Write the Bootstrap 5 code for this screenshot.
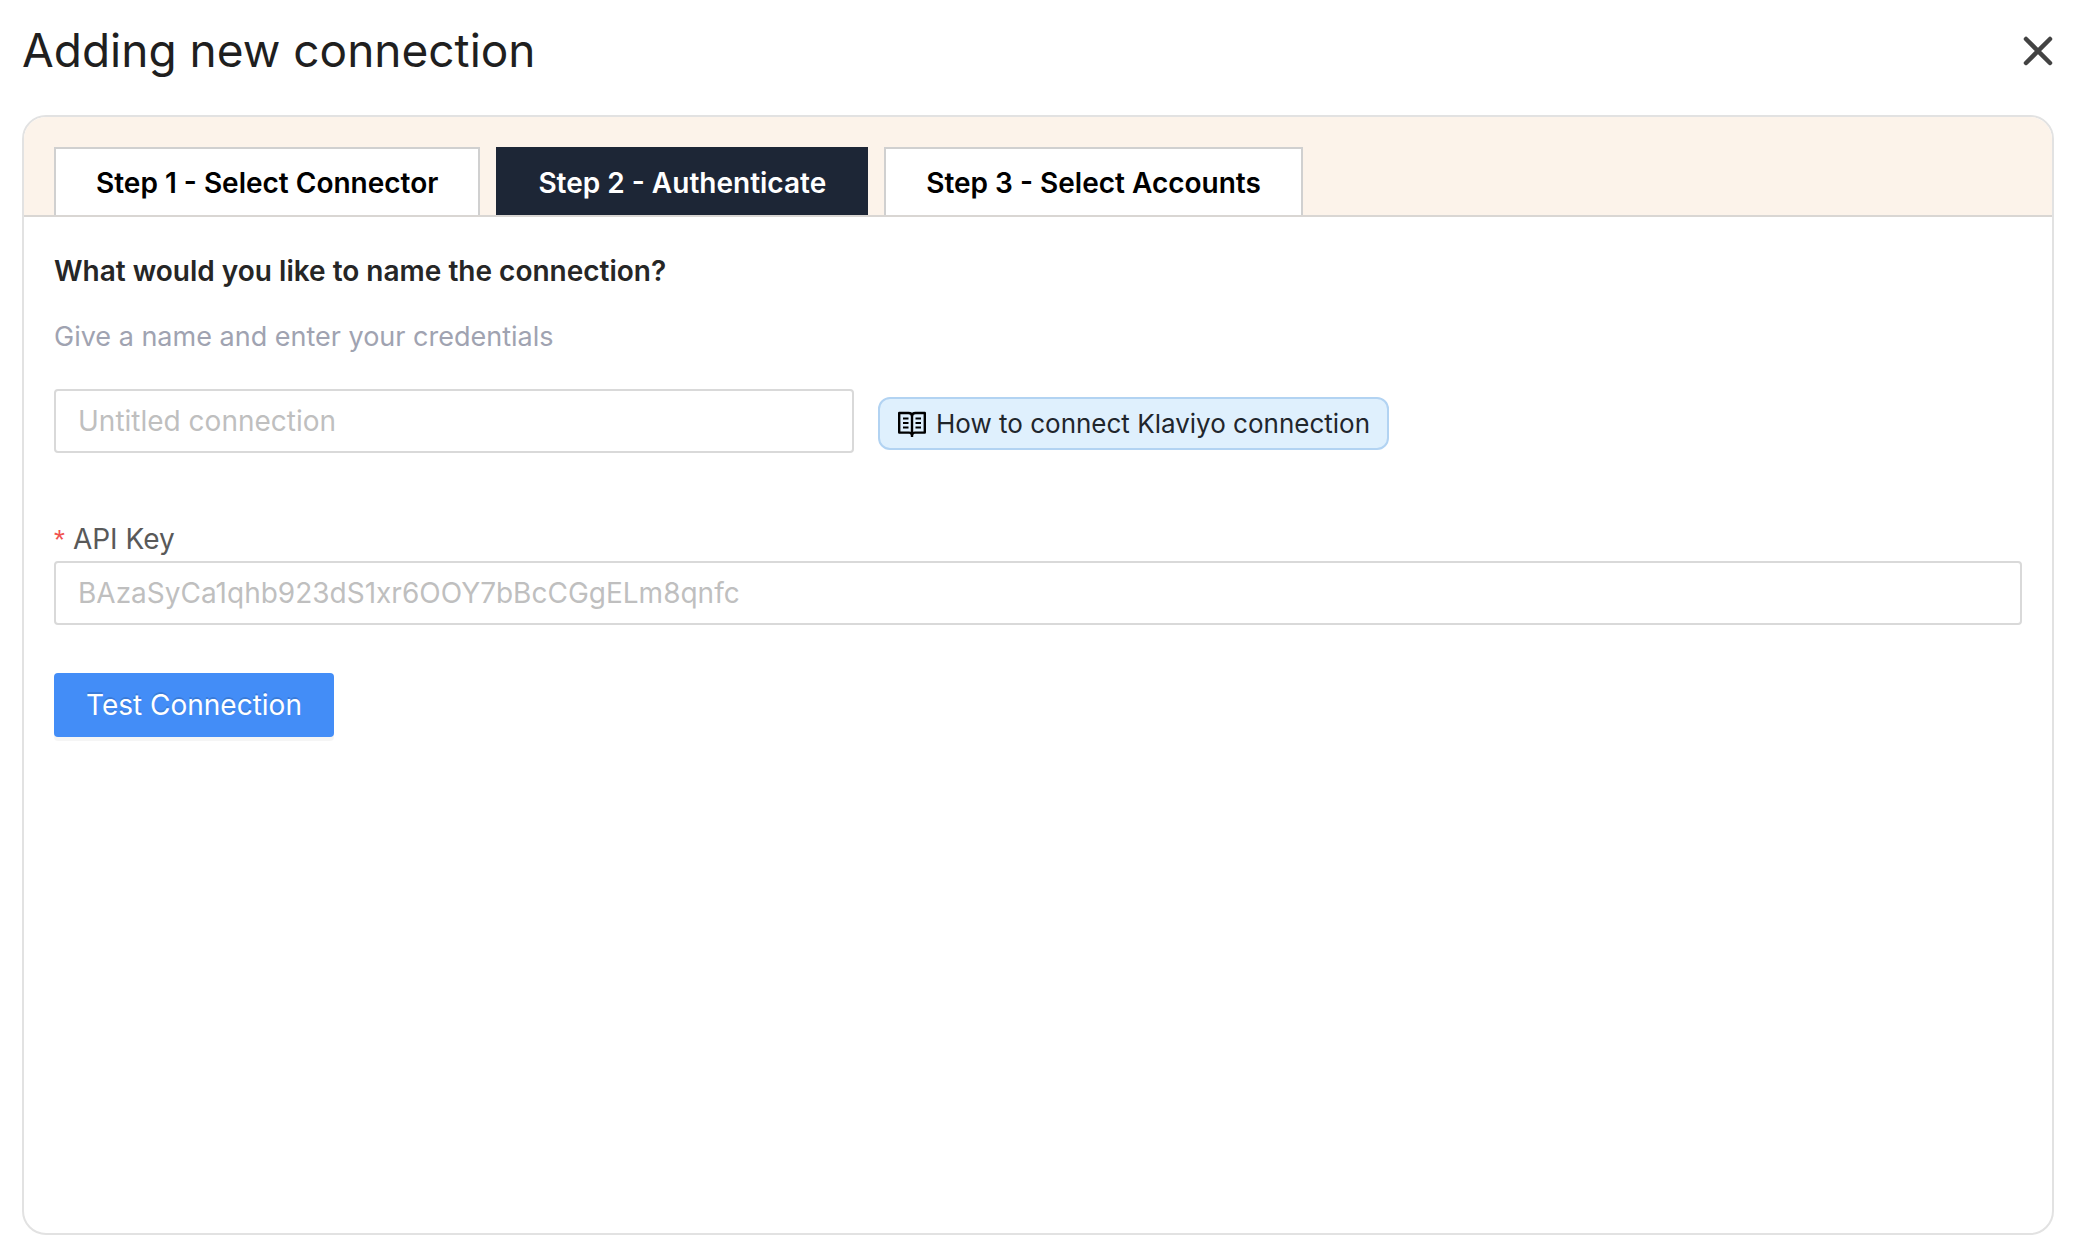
<!DOCTYPE html>
<html lang="en">
<head>
<meta charset="utf-8">
<meta name="viewport" content="width=device-width, initial-scale=1">
<title>Adding new connection</title>
<link href="https://cdn.jsdelivr.net/npm/bootstrap@5.3.0/dist/css/bootstrap.min.css" rel="stylesheet">
<style>
  body { font-family: Inter, "Liberation Sans", sans-serif; font-size: 28px; line-height: 44px; color: #262626; background: #fff; }
  .page-shell { min-height: 100vh; padding: 20px 20px 25px 22px; }
  .page-title { font-size: 46px; line-height: 60px; font-weight: 400; color: #1f1f1f; }
  .close-btn { width: 32px; height: 32px; line-height: 0; color: #434343; }
  .wizard { border: 2px solid #e2e2e2; border-radius: 24px; margin-top: 35px; overflow: hidden; }
  .wizard-head { background: #fcf3ea; border-bottom: 2px solid #d9d6d3; padding: 30px 30px 0; }
  .step-tabs { gap: 16px; }
  .step-tabs .nav-link { border: 2px solid #d0d0d0; border-bottom: 0; border-radius: 0; background: #fff; color: #000; font-weight: 600; padding: 12px 40px; height: 68px; }
  .step-tabs .nav-link.active { background: #1d2636; border-color: #1d2636; color: #fff; }
  .wizard-body { padding: 32px 30px; }
  .question { font-weight: 600; margin-bottom: 22px; }
  .hint { color: #a0a3b1; font-size: 27px; margin-bottom: 30px; }
  .form-control.field { height: 64px; border: 2px solid #d9d9d9; border-radius: 4px; padding: 8px 22px; font-size: 28px; line-height: 44px; }
  .form-control.field::placeholder { color: #bfbfbf; }
  .name-field { max-width: 800px; }
  .help-link { background: #dff0fd; border: 2px solid #b2d3f2; border-radius: 12px; font-size: 26px; line-height: 49px; padding: 0 17px; margin-top: 8px; color: #1f262c; gap: 9px; }
  .key-group { margin-top: 64px; margin-bottom: 48px; }
  .key-label { color: #595959; }
  .req { color: #f0524f; font-family: "Liberation Sans", sans-serif; font-size: 28px; line-height: 28px; margin-right: 8px; }
  .test-btn { background: #438df7; border: 0; border-radius: 4px; color: #fff; font-size: 28px; line-height: 44px; padding: 10px 32px; box-shadow: 0 4px 0 rgba(0,0,0,.04); text-shadow: 0 -2px 0 rgba(0,0,0,.12); }
</style>
</head>
<body>
<main class="page-shell d-flex flex-column">
  <header class="d-flex justify-content-between align-items-center">
    <h1 class="page-title mb-0">Adding new connection</h1>
    <button type="button" class="close-btn btn p-0 border-0" aria-label="Close">
      <svg width="32" height="32" viewBox="0 0 32 32" fill="none" stroke="currentColor" stroke-width="4.500" stroke-linecap="round"><path d="M4 5 28 29M28 5 4 29"/></svg>
    </button>
  </header>
  <section class="wizard flex-grow-1">
    <div class="wizard-head">
      <ul class="nav step-tabs">
        <li class="nav-item"><a class="nav-link" href="#">Step 1 - Select Connector</a></li>
        <li class="nav-item"><a class="nav-link active" href="#" aria-current="step">Step 2 - Authenticate</a></li>
        <li class="nav-item"><a class="nav-link" href="#">Step 3 - Select Accounts</a></li>
      </ul>
    </div>
    <form class="wizard-body">
      <label class="question d-block" for="connName">What would you like to name the connection?</label>
      <p class="hint">Give a name and enter your credentials</p>
      <div class="d-flex align-items-start gap-4">
        <input type="text" class="form-control field name-field" id="connName" placeholder="Untitled connection">
        <a href="#" class="help-link d-inline-flex align-items-center text-decoration-none text-nowrap">
          <svg width="30" height="28" viewBox="0 0 30 28" fill="none" stroke="#000" stroke-width="2.400" stroke-linejoin="round"><path d="M2.200 3H11.500Q15 3 15 6Q15 3 18.500 3H27.800V22.600H18Q15.500 22.600 15 25Q14.500 22.600 12 22.600H2.200Z"/><path d="M15 5.500V27"/><path stroke-width="2" d="M6 8.500H11.500M6 13H11.500M6 17.500H11.500M18.500 8.500H24M18.500 13H24M18.500 17.500H24"/></svg>
          <span>How to connect Klaviyo connection</span>
        </a>
      </div>
      <div class="key-group">
        <label class="key-label d-block" for="apiKey"><span class="req">*</span>API Key</label>
        <input type="text" class="form-control field" id="apiKey" placeholder="BAzaSyCa1qhb923dS1xr6OOY7bBcCGgELm8qnfc">
      </div>
      <button type="button" class="test-btn btn">Test Connection</button>
    </form>
  </section>
</main>
<script src="https://cdn.jsdelivr.net/npm/bootstrap@5.3.0/dist/js/bootstrap.bundle.min.js"></script>
</body>
</html>
